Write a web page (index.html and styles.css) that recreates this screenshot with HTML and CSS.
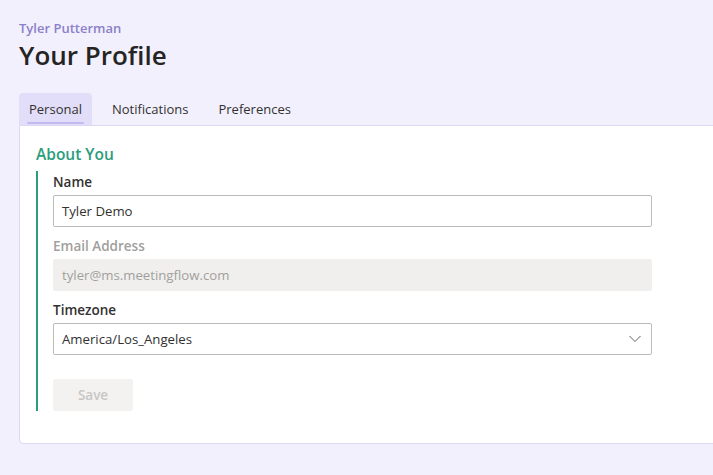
FILE: index.html
```html
<!DOCTYPE html>
<html>
<head>
<meta charset="utf-8">
<link rel="stylesheet" href="styles.css">
</head>
<body>
<div class="page">
  <div class="owner">Tyler Putterman</div>
  <h1 class="title">Your Profile</h1>
  <div class="tabs">
    <div class="tab active"><span>Personal</span></div>
    <div class="tab"><span>Notifications</span></div>
    <div class="tab"><span>Preferences</span></div>
  </div>
  <div class="card">
    <h2 class="section-title">About You</h2>
    <div class="section">
      <div class="field">
        <label class="label">Name</label>
        <div class="input">Tyler Demo</div>
      </div>
      <div class="field">
        <label class="label disabled">Email Address</label>
        <div class="input disabled">tyler@ms.meetingflow.com</div>
      </div>
      <div class="field">
        <label class="label">Timezone</label>
        <div class="input select">
          <span>America/Los_Angeles</span>
          <svg class="chevron" width="12" height="8" viewBox="0 0 12 8"><path d="M0.5 1 L6 6.5 L11.5 1" fill="none" stroke="#605e5c" stroke-width="1"/></svg>
        </div>
      </div>
      <button class="save">Save</button>
    </div>
  </div>
</div>
</body>
</html>
```

FILE: styles.css
```css
html, body {
  margin: 0;
  padding: 0;
  background: #f2f0fd;
  overflow: hidden;
  font-family: "Open Sans", "Noto Sans", sans-serif;
  color: #323130;
}
.page {
  padding: 19px 0 0 19px;
}
.owner {
  font-size: 13px;
  line-height: 18px;
  font-weight: 600;
  color: #8b7fc9;
}
.title {
  margin: 0;
  font-size: 26px;
  line-height: 36px;
  font-weight: 600;
  color: #252423;
}
.tabs {
  display: flex;
  gap: 10px;
  margin-top: 20px;
  height: 32px;
}
.tab {
  padding: 0 10px;
  font-size: 13px;
  line-height: 32px;
  color: #323130;
  border-radius: 4px 4px 0 0;
  position: relative;
}
.tab.active {
  background: #e2def9;
}
.tab.active::after {
  content: "";
  position: absolute;
  left: 8px;
  right: 8px;
  bottom: 1px;
  height: 2px;
  border-radius: 1px;
  background: #c3baf0;
}
.card {
  width: 720px;
  background: #fff;
  border: 1px solid #dcd8f3;
  border-radius: 0 0 0 4px;
  padding: 16px 16px 32px 16px;
}
.section-title {
  margin: 0 0 5px 0;
  font-size: 15.5px;
  line-height: 24px;
  font-weight: 600;
  color: #2b9d7d;
}
.section {
  border-left: 2px solid #2b9d7d;
  padding-left: 15px;
  display: flex;
  flex-direction: column;
  gap: 8px;
  width: 599px;
}
.field {
  display: flex;
  flex-direction: column;
}
.label {
  font-size: 13.5px;
  line-height: 20px;
  padding: 1px 0 3px;
  font-weight: 600;
  color: #323130;
}
.label.disabled {
  color: #a19f9d;
}
.input {
  box-sizing: border-box;
  height: 32px;
  border: 1px solid #bdbcbb;
  border-radius: 2px;
  padding: 0 8px;
  font-size: 13.2px;
  line-height: 30px;
  color: #323130;
}
.input.disabled {
  border-color: #f0efed;
  background: #f0efed;
  color: #a19f9d;
}
.select {
  display: flex;
  align-items: center;
  justify-content: space-between;
}
.chevron {
  margin-right: 2px;
}
.save {
  align-self: flex-start;
  margin-top: 16px;
  width: 80px;
  height: 32px;
  border: none;
  border-radius: 2px;
  background: #f3f2f1;
  color: #c8c6c4;
  font-family: inherit;
  font-size: 13.5px;
  font-weight: 600;
}
```
